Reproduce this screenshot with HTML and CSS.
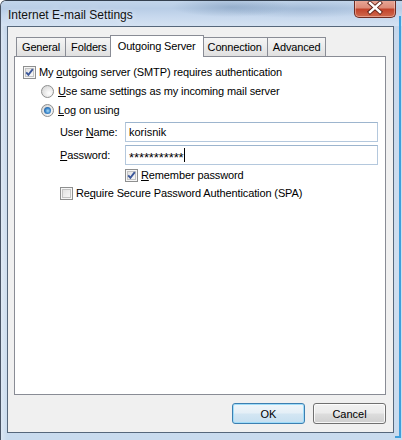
FILE: index.html
```html
<!DOCTYPE html>
<html>
<head>
<meta charset="utf-8">
<link rel="stylesheet" href="styles.css">
</head>
<body>
<div class="window">
  <div class="titlebar">
    <span class="title">Internet E-mail Settings</span>
    <div class="close">
      <svg width="42" height="18" viewBox="0 0 42 18">
        <path d="M16 4 L26 13 M26 4 L16 13" stroke="#5a1f16" stroke-width="4.2" stroke-linecap="square"/>
        <path d="M16 4 L26 13 M26 4 L16 13" stroke="#ffffff" stroke-width="2.4" stroke-linecap="square"/>
      </svg>
    </div>
  </div>
  <div class="client">
    <div class="tabs">
      <div class="tab">General</div>
      <div class="tab">Folders</div>
      <div class="tab active">Outgoing Server</div>
      <div class="tab">Connection</div>
      <div class="tab">Advanced</div>
    </div>
    <div class="panel">
      <div class="row r1"><span class="cb checked"><svg width="13" height="13" viewBox="0 0 13 13"><path d="M3.2 6.3 L5.4 8.8 L9.8 3.2" fill="none" stroke="#3b579a" stroke-width="1.9"/></svg></span><span class="lbl">My <u>o</u>utgoing server (SMTP) requires authentication</span></div>
      <div class="row r2 ind1"><span class="rb"></span><span class="lbl"><u>U</u>se same settings as my incoming mail server</span></div>
      <div class="row r3 ind1"><span class="rb on"></span><span class="lbl"><u>L</u>og on using</span></div>
      <div class="field f1"><span class="flabel">User <u>N</u>ame:</span><div class="input">korisnik</div></div>
      <div class="field f2"><span class="flabel"><u>P</u>assword:</span><div class="input"><span class="stars">***********</span><span class="caret"></span></div></div>
      <div class="row r6 ind3"><span class="cb checked"><svg width="13" height="13" viewBox="0 0 13 13"><path d="M3.2 6.3 L5.4 8.8 L9.8 3.2" fill="none" stroke="#3b579a" stroke-width="1.9"/></svg></span><span class="lbl"><u>R</u>emember password</span></div>
      <div class="row r7 ind2"><span class="cb"></span><span class="lbl">Re<u>q</u>uire Secure Password Authentication (SPA)</span></div>
    </div>
    <div class="buttons">
      <div class="btn default">OK</div>
      <div class="btn">Cancel</div>
    </div>
  </div>
</div>
</body>
</html>
```

FILE: styles.css
```css
html, body {
  margin: 0;
  padding: 0;
  background: #ffffff;
}

body {
  font-family: "Liberation Sans", Arial, sans-serif;
  font-size: 11px;
  color: #000;
}

.window {
  width: 402px;
  height: 440px;
  box-sizing: border-box;
  border-top: 1px solid #34404f;
  border-left: 1px solid #4a5566;
  border-top-left-radius: 6px;
  display: flex;
  flex-direction: column;
  background:
    linear-gradient(90deg, rgba(255,255,255,0.35) 0, rgba(255,255,255,0) 6px),
    linear-gradient(180deg, #bcd0e6 0%, #c7d8ec 8%, #cfdeef 60%, #c9dbee 100%);
  position: relative;
  overflow: hidden;
}

.window::after {
  content: "";
  position: absolute;
  right: 1px;
  bottom: 2px;
  width: 4px;
  height: 420px;
  border-right: 2px solid #3f9fdc;
  border-bottom: 2px solid #3f9fdc;
  pointer-events: none;
}

.titlebar {
  height: 25px;
  display: flex;
  align-items: flex-start;
  justify-content: space-between;
  padding: 0 6px 0 7px;
  background:
    radial-gradient(ellipse 60px 10px at 230px 6px, rgba(110,140,175,0.45), rgba(110,140,175,0)),
    radial-gradient(ellipse 80px 9px at 300px 8px, rgba(120,150,185,0.35), rgba(120,150,185,0)),
    linear-gradient(180deg, #c2d5ea 0%, #b8cde6 30%, #c8d9ee 65%, #d4e2f2 100%);
}

.title {
  font-size: 12px;
  line-height: 12px;
  margin-top: 8px;
  color: #111;
  text-shadow: 0 0 6px rgba(255,255,255,0.9);
}

.close {
  width: 42px;
  height: 18px;
  margin-top: -1px;
  box-sizing: border-box;
  border: 1px solid #6e2b22;
  border-top: none;
  border-radius: 0 0 5px 5px;
  background: linear-gradient(180deg, #e9a999 0%, #dc8b78 45%, #c2432b 55%, #d06a4e 100%);
  box-shadow: inset 0 0 0 1px rgba(255,220,210,0.45);
  overflow: hidden;
}

.close svg {
  display: block;
  margin: -1px 0 0 -1px;
}

.client {
  margin: 0 8px 0 6px;
  height: 407px;
  box-sizing: border-box;
  border: 1px solid #56677b;
  background: #f0f0f0;
  padding: 8px 7px 8px 0;
  display: flex;
  flex-direction: column;
}

.tabs {
  display: flex;
  align-items: flex-end;
  height: 22px;
  margin-bottom: -1px;
  padding-left: 8px;
  position: relative;
  z-index: 1;
}

.tab {
  height: 18px;
  line-height: 18px;
  padding: 0 5px;
  margin-bottom: 1px;
  border: 1px solid #898c95;
  border-bottom: none;
  background: linear-gradient(180deg, #f5f5f5 0%, #ebebeb 50%, #e0e0e0 100%);
  letter-spacing: -0.15px;
  white-space: nowrap;
}

.tab + .tab {
  margin-left: -1px;
}

.tab.active {
  height: 21px;
  line-height: 20px;
  margin: 0 -2px 0 -3px;
  padding: 0 7px;
  background: #ffffff;
  position: relative;
  z-index: 2;
}

.tab.active + .tab {
  margin-left: 0;
}

.panel {
  margin-left: 6px;
  height: 339px;
  box-sizing: border-box;
  border: 1px solid #898c95;
  background: #ffffff;
  padding: 7px 8px 0 8px;
  display: flex;
  flex-direction: column;
  align-items: flex-start;
}

.row {
  display: flex;
  align-items: center;
  height: 16px;
  white-space: nowrap;
  letter-spacing: -0.12px;
}

.r2, .r3 { margin-top: 3px; }
.r6, .r7 { margin-top: 2px; }

.ind1 { padding-left: 18px; }
.ind2 { padding-left: 37px; }
.ind3 { padding-left: 102px; }

.lbl {
  margin-left: 3px;
}

.rb + .lbl {
  margin-left: 4px;
}

.cb {
  width: 13px;
  height: 13px;
  box-sizing: border-box;
  border: 1px solid #8e8f8f;
  background: linear-gradient(135deg, #dcdcdc 0%, #f0f0f0 60%, #fcfcfc 100%);
  box-shadow: inset 0 0 0 1px #f6f6f6, inset 0 0 0 2px #c3c3c3;
  position: relative;
  flex: none;
}

.cb svg {
  position: absolute;
  left: -1px;
  top: -1px;
}

.rb {
  width: 13px;
  height: 13px;
  box-sizing: border-box;
  border-radius: 50%;
  border: 1px solid #8e8f8f;
  background: radial-gradient(circle at 65% 65%, #ffffff 0%, #e9e9e9 45%, #cfcfcf 100%);
  position: relative;
  flex: none;
}

.rb.on::after {
  content: "";
  position: absolute;
  left: 2px;
  top: 2px;
  width: 7px;
  height: 7px;
  border-radius: 50%;
  background: radial-gradient(circle at 55% 55%, #a9ddf8 0%, #3d88cc 45%, #123c74 100%);
}

.field {
  display: flex;
  align-items: center;
  padding-left: 37px;
  letter-spacing: -0.12px;
}

.f1 { margin-top: 4px; }
.f2 { margin-top: 3px; }

.flabel {
  width: 65px;
  flex: none;
  white-space: nowrap;
}

.input {
  width: 253px;
  height: 20px;
  box-sizing: border-box;
  border: 1px solid #b4c8dd;
  border-top-color: #9db5ce;
  background: #fff;
  padding-left: 3px;
  display: flex;
  align-items: center;
  letter-spacing: 0;
}

.stars {
  font-size: 13px;
  letter-spacing: -0.1px;
  line-height: 12px;
  padding-top: 5px;
}

.caret {
  width: 1px;
  height: 14px;
  background: #000;
  margin-left: 0;
}

.buttons {
  display: flex;
  justify-content: flex-end;
  gap: 8px;
  margin-top: 8px;
}

.btn {
  width: 73px;
  height: 21px;
  box-sizing: border-box;
  border: 1px solid #707070;
  border-radius: 3px;
  background: linear-gradient(180deg, #f2f2f2 0%, #ebebeb 48%, #dddddd 52%, #cfcfcf 100%);
  box-shadow: inset 0 0 0 1px rgba(255,255,255,0.8);
  display: flex;
  align-items: center;
  justify-content: center;
}

.btn.default {
  border-color: #3c7fb1;
  box-shadow: inset 0 0 0 1px #9fdcf9;
  background: linear-gradient(180deg, #f0f6fa 0%, #e4eff7 48%, #d3e6f3 52%, #c6dff0 100%);
}
```
